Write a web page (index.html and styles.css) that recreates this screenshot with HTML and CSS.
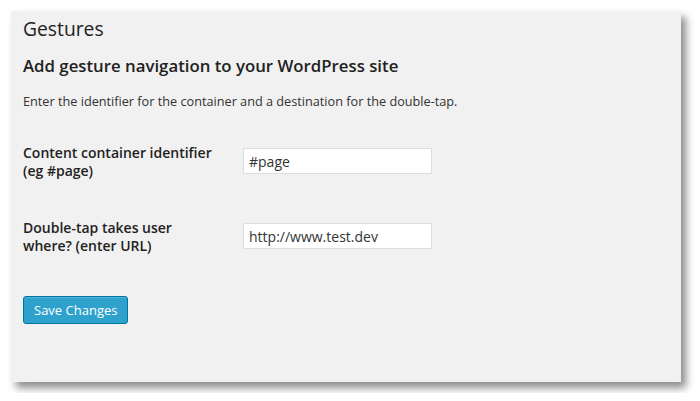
FILE: index.html
```html
<!DOCTYPE html>
<html lang="en">
<head>
    <meta charset="UTF-8">
    <meta name="viewport" content="width=device-width, initial-scale=1.0">
    <title>Gestures</title>
    <link rel="stylesheet" href="styles.css">
</head>
<body>
    <div class="panel">
        <h2 class="title">Gestures</h2>
        <h3 class="subtitle">Add gesture navigation to your WordPress site</h3>
        <p class="intro">Enter the identifier for the container and a destination for the double-tap.</p>

        <form class="settings">
            <div class="row">
                <label class="row-label" for="container">Content container identifier (eg #page)</label>
                <input class="field" type="text" id="container" value="#page">
            </div>
            <div class="row">
                <label class="row-label" for="destination">Double-tap takes user where? (enter URL)</label>
                <input class="field" type="text" id="destination" value="http://www.test.dev">
            </div>
            <button type="button" class="button-primary">Save Changes</button>
        </form>
    </div>
</body>
</html>
```

FILE: styles.css
```css
body {
    font-family: "Open Sans", sans-serif;
    color: #222;
    background-color: #fff;
    margin: 0;
    padding: 11px;
}

.panel {
    background-color: #f1f1f1;
    width: 670px;
    height: 371px;
    box-sizing: border-box;
    padding: 5px 12px 0;
    box-shadow: 5px 6px 8px rgba(0, 0, 0, 0.45);
}

.title {
    font-size: 19.3px;
    font-weight: 400;
    line-height: 26px;
    margin: 0;
}

.subtitle {
    font-size: 16.8px;
    font-weight: 600;
    line-height: 24px;
    margin: 12px 0 0;
}

.intro {
    font-size: 12.7px;
    line-height: 20px;
    color: #333;
    margin: 13px 0 0;
}

.settings {
    margin-top: 33px;
}

.row {
    display: flex;
    align-items: flex-start;
    margin-bottom: 39px;
}

.row-label {
    width: 196px;
    margin-right: 24px;
    font-size: 14px;
    font-weight: 600;
    line-height: 18px;
}

.field {
    width: 189px;
    height: 26px;
    box-sizing: border-box;
    margin-top: 4px;
    padding: 0 5px;
    border: 1px solid #ddd;
    background-color: #fff;
    font-family: "Open Sans", sans-serif;
    font-size: 14px;
    color: #333;
}

.button-primary {
    margin-top: 2px;
    height: 28px;
    padding: 0 10px;
    border: 1px solid #0074a2;
    border-radius: 3px;
    background-color: #2ea2cc;
    box-shadow: inset 0 1px 0 rgba(120, 200, 230, 0.5);
    color: #fff;
    font-family: "Open Sans", sans-serif;
    font-size: 13px;
    cursor: pointer;
}
```
